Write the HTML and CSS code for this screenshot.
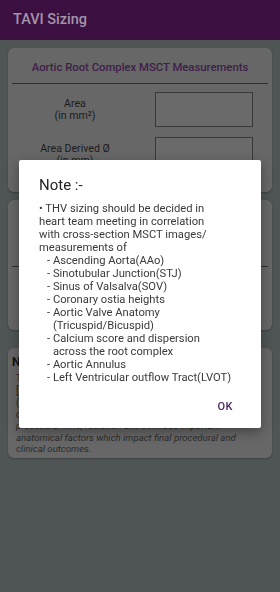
FILE: index.html
```html
<!DOCTYPE html>
<html lang="en">
<head>
<meta charset="utf-8">
<title>TAVI Sizing</title>
<link rel="stylesheet" href="styles.css">
</head>
<body>
<header class="appbar"><h1 class="appbar-title">TAVI Sizing</h1></header>
<main class="content">
  <section class="card card-measure">
    <h2 class="card-title">Aortic Root Complex MSCT Measurements</h2>
    <div class="divider"></div>
    <div class="field-row">
      <div class="field-label">Area<br>(in mm²)</div>
      <div class="field-box"></div>
    </div>
    <div class="field-row">
      <div class="field-label">Area Derived Ø<br>(in mm)</div>
      <div class="field-box"></div>
    </div>
  </section>
  <section class="card card-result">
    <div class="divider divider-result"></div>
  </section>
  <section class="card card-note">
    <h3 class="note-title">Note:</h3>
    <p class="note-text">The valve size suggested here is based on the<br>[annulus] measurements entered above only<br>(area derived and perimeter derived diameters)<br>calculated by the manufacturer's sizing chart.</p>
    <p class="note-italic">procedural time, radiation and contrast, important<br>anatomical factors which impact final procedural and<br>clinical outcomes.</p>
  </section>
</main>
<div class="dialog" role="dialog">
  <h2 class="dialog-title">Note :-</h2>
  <div class="dialog-body">
    <p class="dialog-lead">• THV sizing should be decided in<br>heart team meeting in correlation<br>with cross-section MSCT images/<br>measurements of</p>
    <ul class="dialog-list">
      <li><span class="dash">-</span><span>Ascending Aorta(AAo)</span></li>
      <li><span class="dash">-</span><span>Sinotubular Junction(STJ)</span></li>
      <li><span class="dash">-</span><span>Sinus of Valsalva(SOV)</span></li>
      <li><span class="dash">-</span><span>Coronary ostia heights</span></li>
      <li><span class="dash">-</span><span>Aortic Valve Anatomy<br>(Tricuspid/Bicuspid)</span></li>
      <li><span class="dash">-</span><span>Calcium score and dispersion<br>across the root complex</span></li>
      <li><span class="dash">-</span><span>Aortic Annulus</span></li>
      <li><span class="dash">-</span><span>Left Ventricular outflow Tract(LVOT)</span></li>
    </ul>
  </div>
  <div class="dialog-actions"><button class="dialog-btn" type="button">OK</button></div>
</div>
</body>
</html>
```
FILE: styles.css
```css
* { box-sizing: border-box; }
html, body { margin: 0; padding: 0; }
body {
  width: 280px;
  height: 592px;
  background: #4f5555;
  font-family: Roboto, "Liberation Sans", sans-serif;
  overflow: hidden;
}
.appbar {
  height: 40px;
  background: #3b0f40;
  display: flex;
  align-items: center;
  padding-left: 13px;
}
.appbar-title {
  margin: 0;
  font-size: 14.5px;
  font-weight: 500;
  color: #a494a9;
  line-height: 18px;
}
.content {
  display: flex;
  flex-direction: column;
  padding: 8px;
}
.card {
  background: #676767;
  border-radius: 6px;
  box-shadow: 0 1px 2px rgba(0,0,0,0.25);
}
.card-measure { height: 144px; padding-top: 13px; }
.card-title {
  margin: 0;
  text-align: center;
  font-size: 11.3px;
  font-weight: 500;
  line-height: 14px;
  color: #3e2049;
}
.divider {
  height: 1px;
  background: #2f2f2f;
  margin: 8px 4px 0;
}
.field-row {
  display: grid;
  grid-template-columns: 1fr 98px;
  column-gap: 17px;
  padding: 0 19px 0 4px;
  margin-top: 8px;
  align-items: center;
}
.field-row + .field-row { margin-top: 10px; }
.field-label {
  text-align: center;
  font-size: 10.6px;
  line-height: 12px;
  color: #1c1c1c;
}
.field-box {
  height: 35px;
  border: 1px solid #393939;
  background: #6a6a6a;
}
.card-result {
  margin-top: 8px;
  height: 130px;
  padding-top: 66px;
}
.divider-result { margin-top: 0; }
.card-note {
  margin-top: 18px;
  height: 110px;
  padding: 7px 10px 0 4px;
}
.note-title {
  margin: 0;
  font-size: 12px;
  font-weight: 700;
  line-height: 14px;
  color: #151515;
}
.note-text {
  margin: 4px 0 0 4px;
  font-size: 10px;
  line-height: 12px;
  color: #222;
  white-space: nowrap;
}
.note-italic {
  margin: -1px 0 0 4px;
  font-size: 9.6px;
  line-height: 11.5px;
  font-style: italic;
  color: #2c2c2c;
  white-space: nowrap;
}
.dialog {
  position: fixed;
  left: 19px;
  top: 160px;
  width: 242px;
  height: 268px;
  background: #ffffff;
  border-radius: 2px;
  box-shadow: 0 4px 12px rgba(0,0,0,0.35);
  padding: 16px 0 4px;
  display: flex;
  flex-direction: column;
}
.dialog-title {
  margin: 0 20px;
  font-size: 15px;
  font-weight: 400;
  line-height: 18px;
  color: #1f1f1f;
}
.dialog-body {
  margin: 7.5px 20px 0;
  font-size: 11.2px;
  line-height: 13px;
  color: #3a3a3a;
  white-space: nowrap;
}
.dialog-lead { margin: 0; }
.dialog-list {
  list-style: none;
  margin: 0;
  padding: 0 0 0 8px;
}
.dialog-list li { display: flex; gap: 2.8px; }
.dialog-actions {
  margin-top: auto;
  height: 36px;
  display: flex;
  justify-content: flex-end;
  align-items: center;
  padding-right: 20px;
}
.dialog-btn {
  border: 0;
  background: transparent;
  padding: 0 8px;
  height: 36px;
  font-family: Roboto, "Liberation Sans", sans-serif;
  font-size: 11px;
  font-weight: 500;
  letter-spacing: 0.5px;
  color: #4b1f5b;
}
```
